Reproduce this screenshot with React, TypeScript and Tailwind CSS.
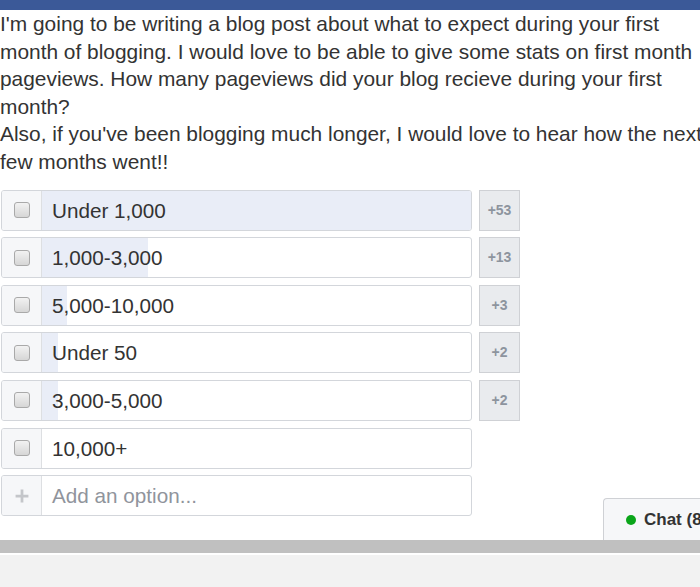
import { Plus } from 'lucide-react';

const options = [
  { label: 'Under 1,000', fill: 430, votes: '+53' },
  { label: '1,000-3,000', fill: 106, votes: '+13' },
  { label: '5,000-10,000', fill: 25, votes: '+3' },
  { label: 'Under 50', fill: 16, votes: '+2' },
  { label: '3,000-5,000', fill: 16, votes: '+2' },
  { label: '10,000+', fill: 0, votes: '' },
];

const Checkbox = () => (
  <div className="w-[16px] h-[16px] rounded-[3px] border border-[#a9a9a9] bg-gradient-to-b from-[#f2f2f2] to-[#d6d6d6]" />
);

const App = () => {
  return (
    <div className="w-[700px] h-[587px] overflow-hidden relative bg-white flex flex-col font-['Liberation_Sans',Arial,sans-serif] text-[#333]">
      <div className="h-[10px] bg-[#3b5998] shrink-0" />
      <div className="flex-1 flex flex-col pl-px">
        {/* post body runs a little past the visible edge */}
        <p className="w-[714px] shrink-0 text-[20.9px] leading-[27.6px] -ml-px">
          I'm going to be writing a blog post about what to expect during your first month of blogging. I would love to be able to give some stats on first month pageviews. How many pageviews did your blog recieve during your first month?
          <br />
          Also, if you've been blogging much longer, I would love to hear how the next few months went!!
        </p>

        <div className="mt-[14px] flex flex-col gap-[6.6px]">
          {options.map((o) => (
            <div key={o.label} className="flex gap-[7px] h-[41px]">
              <div className="w-[471px] flex border border-[#d3d6db] rounded-[3px] overflow-hidden">
                <div className="w-[40px] shrink-0 flex items-center justify-center bg-[#f6f7f9] border-r border-[#dddfe2]">
                  <Checkbox />
                </div>
                <div className="relative flex-1 flex items-center">
                  <div
                    className="absolute left-0 top-0 bottom-0 bg-[#e9edf7]"
                    style={{ width: o.fill }}
                  />
                  <span className="relative pl-[10px] text-[20.7px]">{o.label}</span>
                </div>
              </div>
              {o.votes && (
                <div className="w-[41px] flex items-center justify-center bg-[#e9ebee] border border-[#cfd1d5] text-[14px] font-bold text-[#8d949e]">
                  {o.votes}
                </div>
              )}
            </div>
          ))}
          <div className="flex h-[41px]">
            <div className="w-[471px] flex border border-[#d3d6db] rounded-[3px] overflow-hidden">
              <div className="w-[40px] shrink-0 flex items-center justify-center bg-[#f6f7f9] border-r border-[#dddfe2]">
                <Plus size={22} strokeWidth={3} className="text-[#c4c6ca]" strokeLinecap="butt" />
              </div>
              <div className="flex-1 flex items-center">
                <span className="pl-[10px] text-[20.7px] text-[#90949c]">Add an option...</span>
              </div>
            </div>
          </div>
        </div>
      </div>

      <div className="h-[13px] bg-[#c0c0c0] shrink-0" />
      <div className="h-[2px] bg-white shrink-0" />
      <div className="h-[32px] bg-[#f2f2f2] shrink-0" />

      <div className="absolute left-[603px] top-[498px] w-[97px] h-[42px] bg-[#f6f7f9] border border-r-0 border-b-0 border-[#cfd1d5] rounded-tl-[4px] flex items-center pl-[22px] gap-[8px] overflow-hidden">
        <span className="w-[10px] h-[10px] shrink-0 rounded-full bg-[#0aa51a]" />
        <span className="text-[17px] font-bold text-[#333] whitespace-nowrap">Chat (8)</span>
      </div>
    </div>
  );
};

export default App;
